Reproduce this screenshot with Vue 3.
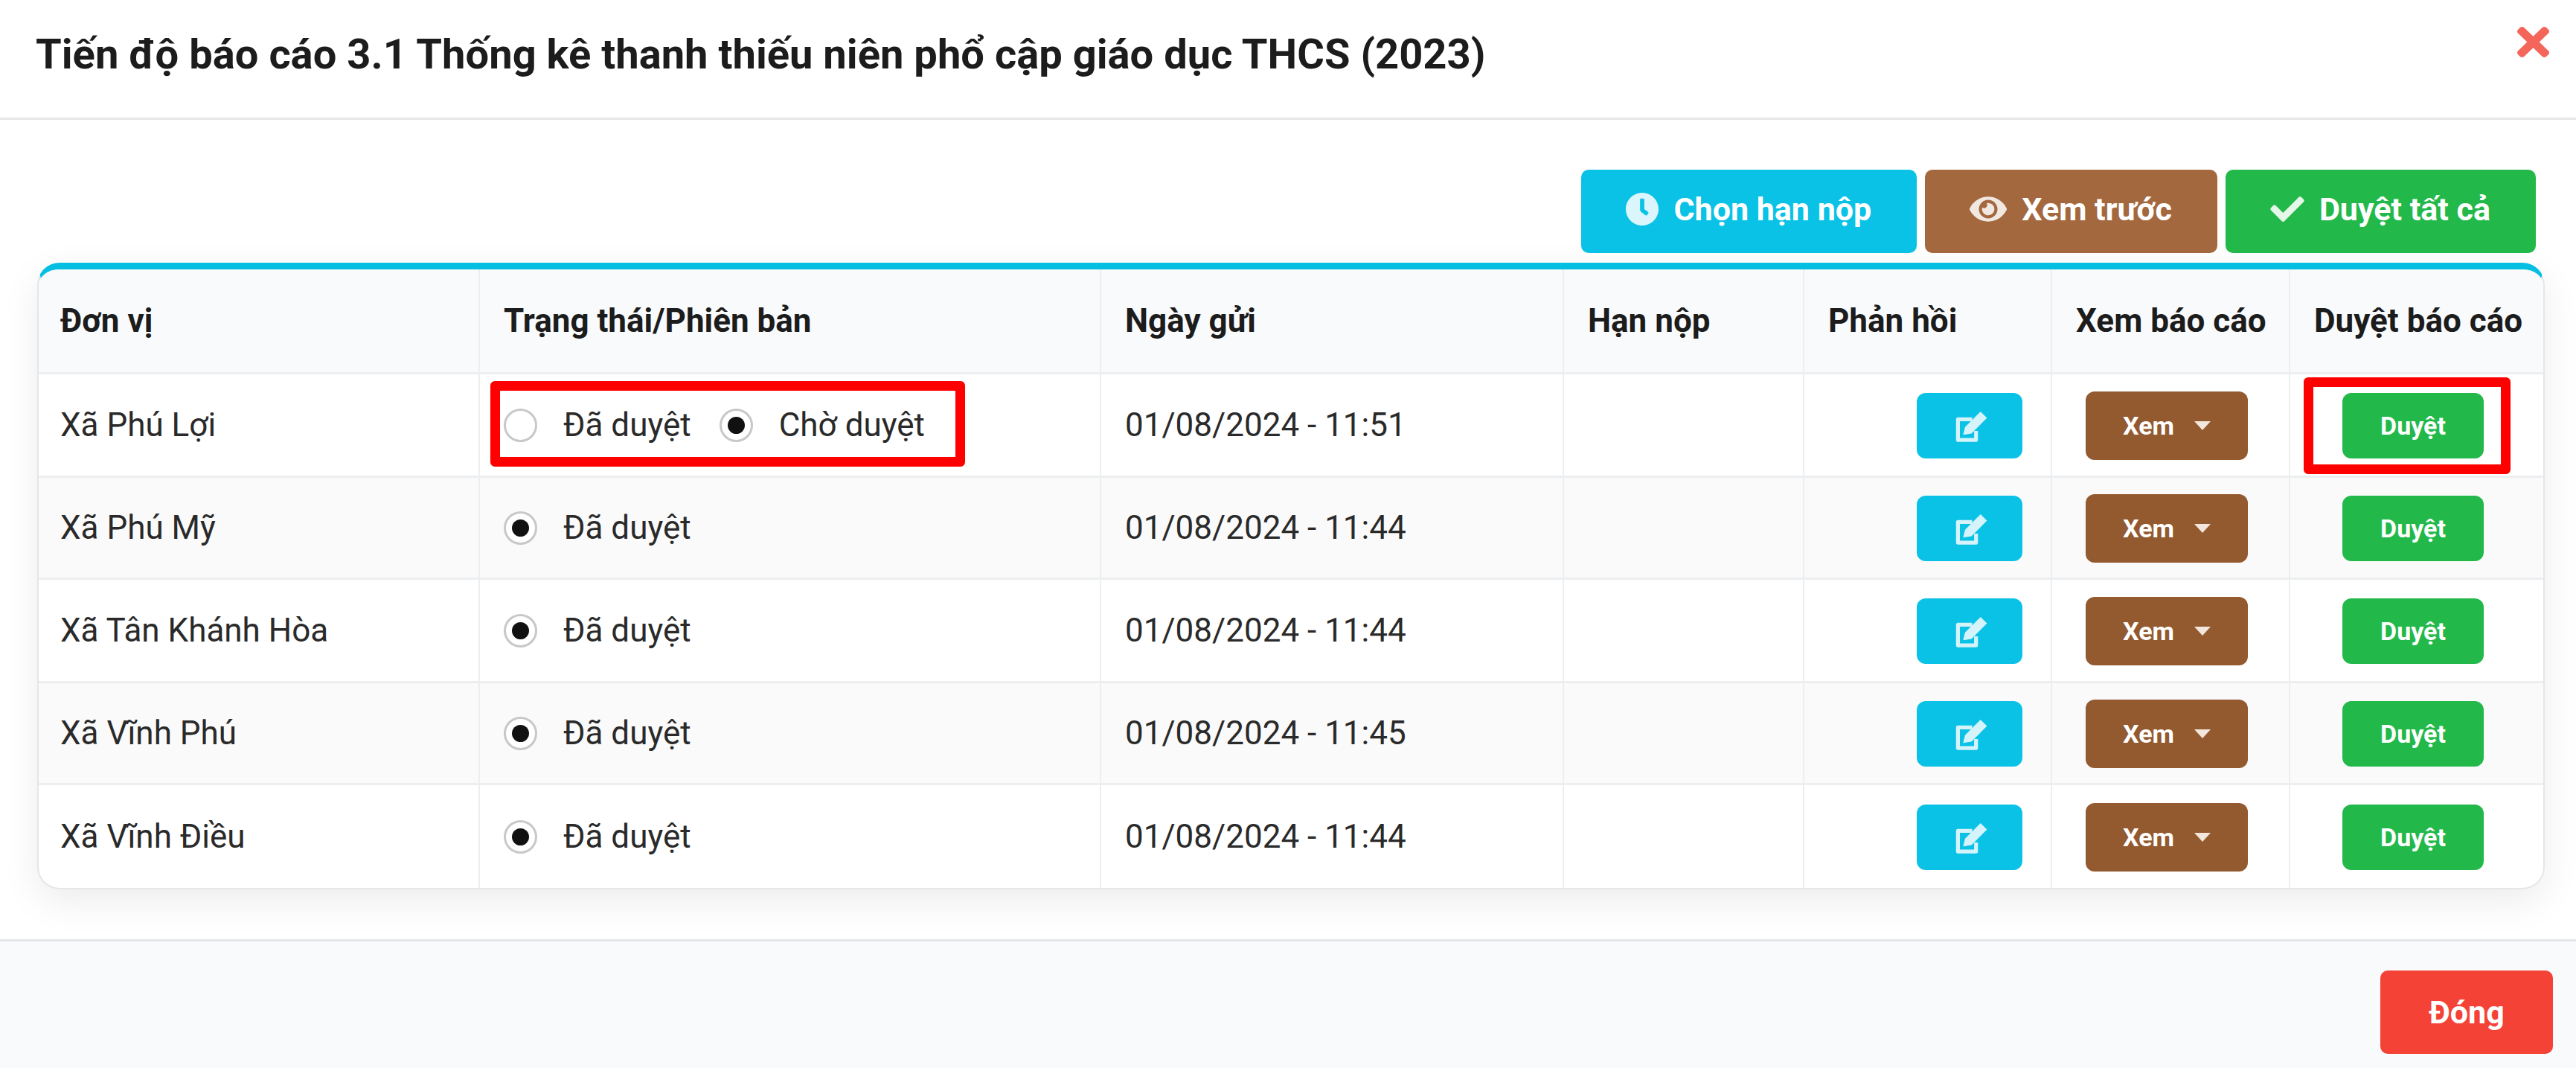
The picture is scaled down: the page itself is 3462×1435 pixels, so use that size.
<script setup>
const rows = [
  { name: 'Xã Phú Lợi', date: '01/08/2024 - 11:51', h: 139, mark: true, options: [{ label: 'Đã duyệt', on: false }, { label: 'Chờ duyệt', on: true }] },
  { name: 'Xã Phú Mỹ', date: '01/08/2024 - 11:44', h: 137, options: [{ label: 'Đã duyệt', on: true }] },
  { name: 'Xã Tân Khánh Hòa', date: '01/08/2024 - 11:44', h: 139, options: [{ label: 'Đã duyệt', on: true }] },
  { name: 'Xã Vĩnh Phú', date: '01/08/2024 - 11:45', h: 137, options: [{ label: 'Đã duyệt', on: true }] },
  { name: 'Xã Vĩnh Điều', date: '01/08/2024 - 11:44', h: 138, options: [{ label: 'Đã duyệt', on: true }] },
];
const columns = ['Đơn vị', 'Trạng thái/Phiên bản', 'Ngày gửi', 'Hạn nộp', 'Phản hồi', 'Xem báo cáo', 'Duyệt báo cáo'];
</script>

<template>
  <div class="modal">
    <header class="modal-head">
      <h1>Tiến độ báo cáo 3.1 Thống kê thanh thiếu niên phổ cập giáo dục THCS (2023)</h1>
      <svg class="close" viewBox="0 80 352 352" preserveAspectRatio="none"><path fill="currentColor" d="M242.72 256l100.07-100.07c12.28-12.28 12.28-32.19 0-44.48l-22.24-22.24c-12.28-12.28-32.19-12.28-44.48 0L176 189.28 75.93 89.21c-12.28-12.28-32.19-12.28-44.48 0L9.21 111.45c-12.28 12.28-12.28 32.19 0 44.48L109.28 256 9.21 356.07c-12.28 12.28-12.28 32.19 0 44.48l22.24 22.24c12.28 12.28 32.2 12.28 44.48 0L176 322.72l100.07 100.07c12.28 12.28 32.2 12.28 44.48 0l22.24-22.24c12.28-12.28 12.28-32.19 0-44.48L242.72 256z"/></svg>
    </header>

    <main class="modal-body">
      <div class="toolbar">
        <button class="btn cyan">
          <svg class="ico-clock" viewBox="8 8 496 496"><path fill="currentColor" opacity=".85" d="M256,8C119,8,8,119,8,256S119,504,256,504,504,393,504,256,393,8,256,8Zm92.49,313h0l-20,25a16,16,0,0,1-22.49,2.5h0l-67-49.72a40,40,0,0,1-15-31.23V112a16,16,0,0,1,16-16h32a16,16,0,0,1,16,16V256l58,42.5A16,16,0,0,1,348.49,321Z"/></svg>
          Chọn hạn nộp
        </button>
        <button class="btn brown">
          <svg class="ico-eye" viewBox="0 64 576 384"><path fill="currentColor" opacity=".85" d="M572.52 241.4C518.29 135.59 410.93 64 288 64S57.68 135.64 3.48 241.41a32.35 32.35 0 0 0 0 29.19C57.71 376.41 165.07 448 288 448s230.32-71.64 284.52-177.41a32.35 32.35 0 0 0 0-29.19zM288 400a144 144 0 1 1 144-144 143.93 143.93 0 0 1-144 144zm0-240a95.31 95.31 0 0 0-25.31 3.79 47.85 47.85 0 0 1-66.9 66.9A95.78 95.78 0 1 0 288 160z"/></svg>
          Xem trước
        </button>
        <button class="btn green">
          <svg class="ico-check" viewBox="0 64 512 384"><path fill="currentColor" opacity=".88" d="M173.898 439.404l-166.4-166.4c-9.997-9.997-9.997-26.206 0-36.204l36.203-36.204c9.997-9.998 26.207-9.998 36.204 0L192 312.69 432.095 72.596c9.997-9.997 26.207-9.997 36.204 0l36.203 36.204c9.997 9.997 9.997 26.206 0 36.204l-294.4 294.401c-9.998 9.997-26.207 9.997-36.204-.001z"/></svg>
          Duyệt tất cả
        </button>
      </div>

      <div class="card">
        <table>
          <colgroup>
            <col style="width: 593px" />
            <col style="width: 835px" />
            <col style="width: 622px" />
            <col style="width: 323px" />
            <col style="width: 333px" />
            <col style="width: 320px" />
            <col style="width: 340px" />
          </colgroup>
          <thead>
            <tr>
              <th v-for="c in columns" :key="c">{{ c }}</th>
            </tr>
          </thead>
          <tbody>
            <tr v-for="r in rows" :key="r.name" :style="{ height: r.h + 'px' }">
              <td>{{ r.name }}</td>
              <td class="status">
                <div class="radios">
                  <label v-for="o in r.options" :key="o.label" class="radio">
                    <span class="dot" :class="{ on: o.on }"></span>{{ o.label }}
                  </label>
                </div>
                <span v-if="r.mark" class="mark mark-status"></span>
              </td>
              <td>{{ r.date }}</td>
              <td></td>
              <td class="cell-reply">
                <button class="mini reply">
                  <svg class="ico-edit" viewBox="0 0 60 60">
                    <path fill="none" stroke="currentColor" stroke-width="6" stroke-linejoin="round" d="M34 20H12v32h28V38"/>
                    <path fill="currentColor" d="M20 44l3-12 24-24 10 10-24 24z"/>
                  </svg>
                </button>
              </td>
              <td class="cell-view">
                <button class="mini view">Xem<i class="caret"></i></button>
              </td>
              <td class="cell-approve">
                <button class="mini approve">Duyệt</button>
                <span v-if="r.mark" class="mark mark-approve"></span>
              </td>
            </tr>
          </tbody>
        </table>
      </div>
    </main>

    <footer class="modal-foot">
      <button class="close-btn">Đóng</button>
    </footer>
  </div>
</template>

<style scoped>
.modal {
  width: 3462px;
  height: 1435px;
  display: flex;
  flex-direction: column;
  background: #fff;
  font-family: Roboto, "Liberation Sans", sans-serif;
  font-size: 44px;
  color: #2a2a2a;
  overflow: hidden;
}

.modal-head {
  height: 161px;
  box-sizing: border-box;
  flex: none;
  display: flex;
  justify-content: space-between;
  align-items: center;
  padding: 0 36px 12px 48px;
  border-bottom: 3px solid #e6e6e6;
}

.modal-head h1 {
  margin: 0;
  font-size: 56.1px;
  font-weight: 700;
  color: #1c1c1c;
}

.close {
  width: 43px;
  height: 41px;
  margin-bottom: 34px;
  color: #f4665a;
}

.modal-body {
  flex: 1;
  padding: 67px 42px 0 50px;
}

.toolbar {
  display: flex;
  justify-content: flex-end;
  gap: 11px;
  margin: 0 12px 13px 0;
}

.btn {
  height: 112px;
  display: flex;
  align-items: center;
  gap: 20px;
  padding: 0 61px 6px 60px;
  border: none;
  border-radius: 10px;
  color: #fff;
  font: 700 43px Roboto, "Liberation Sans", sans-serif;
}

.cyan { background: #0ac2e6; }
.brown { background: #a4683f; }
.green { background: #22b94a; }

.ico-clock { width: 44px; height: 44px; }
.ico-eye { width: 50px; height: 36px; }
.ico-check { width: 46px; height: 34px; }

.card {
  box-sizing: border-box;
  width: 3370px;
  border: 2px solid #e4e6e8;
  border-top: 9px solid #05bfe3;
  border-radius: 30px;
  overflow: hidden;
  box-shadow: 0 16px 50px rgba(0, 0, 0, 0.08);
}

table {
  width: 100%;
  table-layout: fixed;
  border-collapse: separate;
  border-spacing: 0;
}

th, td {
  box-sizing: border-box;
  padding: 0 0 0 32px;
  text-align: left;
  border-right: 2px solid #eceef0;
  border-bottom: 3px solid #eceef0;
  white-space: nowrap;
}

th:first-child, td:first-child { padding-left: 29px; }
th:last-child, td:last-child { border-right: none; }
tbody tr:last-child td { border-bottom: none; }

th {
  height: 141px;
  background: #f9fafc;
  font-weight: 700;
  color: #1c1c1c;
}

tbody tr:nth-child(even) td { background: #fafafa; }

td { position: relative; }

.radios {
  display: flex;
  align-items: center;
  gap: 38px;
}

.radio {
  display: flex;
  align-items: center;
  gap: 35px;
}

.dot {
  width: 45px;
  height: 45px;
  box-sizing: border-box;
  display: flex;
  align-items: center;
  justify-content: center;
  border: 3px solid #c8c8c8;
  border-radius: 50%;
  background: #fff;
}

.dot.on::after {
  content: "";
  width: 23px;
  height: 23px;
  border-radius: 50%;
  background: #111;
}

.mini {
  border: none;
  padding: 0;
  margin-top: 2px;
  border-radius: 12px;
  color: #fff;
  font: 700 34px Roboto, "Liberation Sans", sans-serif;
  vertical-align: middle;
}

.cell-reply { text-align: right; padding-right: 38px; }
.cell-view { padding-left: 45px; }
.cell-approve { padding-left: 70px; }

.reply {
  width: 142px;
  height: 88px;
  background: #0ac2e6;
  display: inline-flex;
  align-items: center;
  justify-content: center;
}

.ico-edit { width: 52px; height: 52px; color: #d4f3fa; }

.view {
  width: 218px;
  height: 92px;
  background: #93592f;
  display: inline-flex;
  align-items: center;
  justify-content: center;
  gap: 27px;
}

.caret {
  width: 0;
  height: 0;
  border-left: 11px solid transparent;
  border-right: 11px solid transparent;
  border-top: 12px solid #f3e6dc;
}

.approve {
  width: 190px;
  height: 88px;
  background: #22b94a;
}

.mark {
  position: absolute;
  box-sizing: border-box;
  border: 13px solid #ff0000;
  border-radius: 6px;
}

.mark-status { left: 14px; top: 9px; width: 638px; height: 115px; }
.mark-approve { left: 18px; top: 4px; width: 278px; height: 130px; }

.modal-foot {
  height: 173px;
  box-sizing: border-box;
  flex: none;
  display: flex;
  justify-content: flex-end;
  padding: 39px 31px 0 0;
  border-top: 3px solid #e3e5e8;
  background: #f9fafc;
}

.close-btn {
  width: 232px;
  height: 112px;
  border: none;
  border-radius: 10px;
  background: #f44336;
  color: #fff;
  font: 700 43px Roboto, "Liberation Sans", sans-serif;
}
</style>
